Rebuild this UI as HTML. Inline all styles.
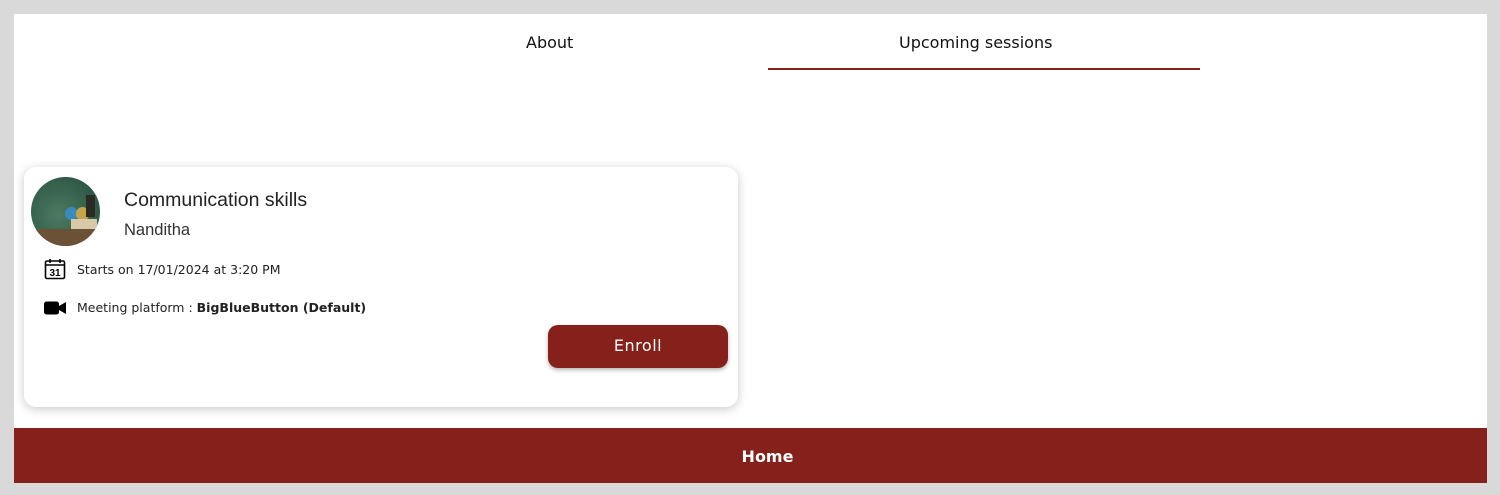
<!DOCTYPE html>
<html><head><meta charset="utf-8"><style>
*{box-sizing:border-box;margin:0;padding:0}
body{width:1500px;height:495px;background:#d9d9d9;font-family:"Liberation Sans",sans-serif;position:relative;overflow:hidden}
.page{position:absolute;left:14px;top:14px;width:1473px;height:414px;background:#fff}
.tab{position:absolute;top:33px;font-family:"DejaVu Sans",sans-serif;font-size:16px;color:#111}
.ul{position:absolute;left:768px;top:68px;width:432px;height:2px;background:#85211a}
.card{position:absolute;left:24px;top:167px;width:714px;height:240px;background:#fff;border-radius:12px;box-shadow:0 2px 10px rgba(0,0,0,.22)}
.av{position:absolute;left:7px;top:10px;width:69px;height:69px;border-radius:50%;background:radial-gradient(circle at 40% 55%,#4d7a60,#2f5a48 70%);overflow:hidden}
.t{position:absolute;left:100px;top:22px;font-size:19.5px;color:#222}
.n{position:absolute;left:100px;top:54px;font-size:16.5px;color:#333}
.r{position:absolute;left:53px;font-family:"DejaVu Sans",sans-serif;font-size:12.5px;color:#222}
.btn{position:absolute;left:524px;top:158px;width:180px;height:43px;background:#85211a;border-radius:10px;color:#fff;font-family:"DejaVu Sans",sans-serif;font-size:16px;text-align:center;line-height:41px;letter-spacing:.5px;box-shadow:0 2px 4px rgba(0,0,0,.3)}
.foot{position:absolute;left:14px;top:428px;width:1473px;height:55px;background:#85211a;color:#fff;font-weight:bold;font-family:"DejaVu Sans",sans-serif;font-size:16px;text-align:center;line-height:58px;padding-left:34px}
</style></head><body>
<div class="page"></div>
<div class="tab" style="left:526px">About</div>
<div class="tab" style="left:899px">Upcoming sessions</div>
<div class="ul"></div>
<div class="card">
<div class="av">
<div style="position:absolute;left:0;top:52px;width:69px;height:17px;background:#6b5236"></div>
<div style="position:absolute;left:34px;top:30px;width:13px;height:13px;border-radius:50%;background:#3a8ac0"></div>
<div style="position:absolute;left:45px;top:30px;width:13px;height:14px;border-radius:50%;background:#c9a34a"></div>
<div style="position:absolute;left:40px;top:42px;width:26px;height:10px;background:#d8c9a8"></div>
<div style="position:absolute;left:55px;top:18px;width:9px;height:22px;background:#2a2a22"></div>
</div>
<div class="t">Communication skills</div>
<div class="n">Nanditha</div>
<svg style="position:absolute;left:20px;top:91px" width="22" height="22" viewBox="0 0 22 22"><rect x="1.5" y="3" width="19" height="17.5" rx="1.5" fill="none" stroke="#000" stroke-width="1.6"/><line x1="1.5" y1="7" x2="20.5" y2="7" stroke="#000" stroke-width="1.6"/><line x1="6" y1="1" x2="6" y2="5" stroke="#000" stroke-width="1.6"/><line x1="16" y1="1" x2="16" y2="5" stroke="#000" stroke-width="1.6"/><text x="11" y="18" font-size="10" font-weight="bold" text-anchor="middle" font-family="Liberation Sans">31</text></svg>
<div class="r" style="top:95px">Starts on 17/01/2024 at 3:20 PM</div>
<svg style="position:absolute;left:20px;top:134px" width="23" height="14" viewBox="0 0 23 14"><rect x="0" y="0.5" width="15" height="13" rx="2.5" fill="#000"/><path d="M15 5 L22 1 V13 L15 9Z" fill="#000"/></svg>
<div class="r" style="top:133px">Meeting platform : <b>BigBlueButton (Default)</b></div>
<div class="btn">Enroll</div>
</div>
<div class="foot">Home</div>
</body></html>
